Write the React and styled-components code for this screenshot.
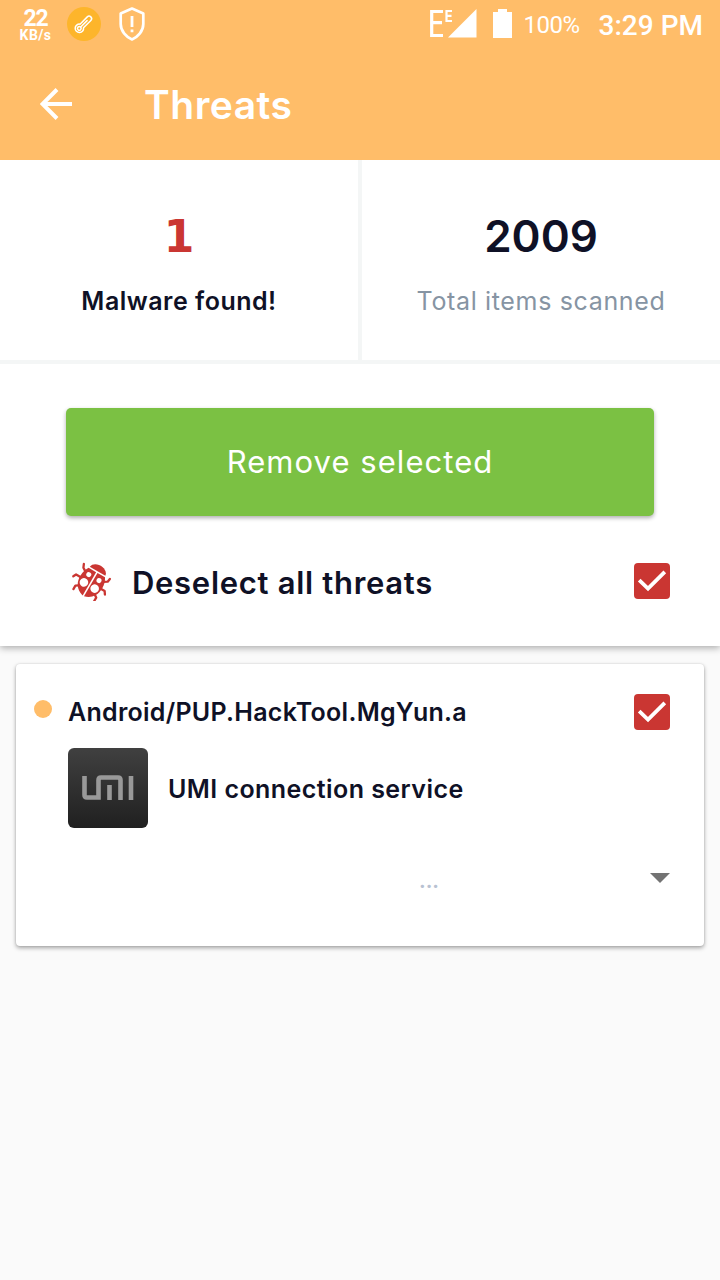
import React from "react";
import styled, { createGlobalStyle } from "styled-components";

const GlobalStyle = createGlobalStyle`
  * { box-sizing: border-box; }
  body { margin: 0; background: #fafafa; font-family: Inter, sans-serif; color: #0f1126; }
`;

const Screen = styled.div`
  width: 720px;
  height: 1280px;
  overflow: hidden;
  background: #fafafa;
`;

const Text = styled.span`
  display: block;
  white-space: nowrap;
  font-size: ${(p) => p.$size}px;
  line-height: ${(p) => p.$line || p.$size}px;
  font-weight: ${(p) => p.$weight || 400};
  letter-spacing: ${(p) => p.$track || 0}px;
  color: ${(p) => p.$color || "#0f1126"};
  font-family: ${(p) => p.$font || "Inter"}, sans-serif;
`;

const Header = styled.header`
  height: 160px;
  background: #ffbd69;
`;

const StatusBar = styled.div`
  height: 50px;
  padding: 0 17px 0 19px;
  display: flex;
  justify-content: space-between;
`;

const StatusGroup = styled.div`
  display: flex;
  align-items: flex-start;
`;

const Speed = styled.div`
  width: 33px;
  margin-right: 15px;
  padding-top: 7px;
  display: flex;
  flex-direction: column;
  align-items: center;
`;

const StatusIcon = styled.svg`
  display: block;
  flex: none;
  margin-top: ${(p) => p.$top}px;
  margin-right: ${(p) => p.$gap || 0}px;
`;

const StatusText = styled(Text)`
  margin-top: ${(p) => p.$top}px;
  margin-right: ${(p) => p.$gap || 0}px;
`;

const AppBar = styled.div`
  height: 110px;
  padding: 0 40px 2px;
  display: flex;
  align-items: center;
  gap: 72px;
`;

const Title = styled(Text)`
  padding-top: 2px;
`;

const Stats = styled.section`
  position: relative;
  height: 204px;
  display: flex;
  background: #fff;
  border-bottom: 4px solid #f4f6f6;
`;

const Stat = styled.div`
  flex: 1;
  padding-top: 46px;
  display: flex;
  flex-direction: column;
  align-items: center;
  gap: 19px;
`;

const Divider = styled.div`
  width: 4px;
  background: #f4f6f6;
`;

const Actions = styled.section`
  height: 282px;
  padding: 44px 50px 0 66px;
  background: #fff;
  box-shadow: 0 2px 7px rgba(0, 0, 0, 0.32);
`;

const RemoveButton = styled.button`
  display: flex;
  align-items: center;
  justify-content: center;
  width: 588px;
  height: 108px;
  padding: 0;
  border: 0;
  border-radius: 5px;
  background: #7bc143;
  box-shadow: 0 2px 4px rgba(0, 0, 0, 0.32);
`;

const SelectRow = styled.div`
  display: flex;
  align-items: center;
  height: 40px;
  margin-top: 45px;
  padding-left: 5px;
`;

const SelectLabel = styled(Text)`
  flex: 1;
  margin-left: 20px;
  padding-top: 3px;
`;

const Check = styled.svg`
  display: block;
  flex: none;
  border-radius: 4px;
  background: #ca3632;
`;

const Card = styled.article`
  height: 282px;
  margin: 18px 16px 0;
  padding: 30px 34px 0 18px;
  background: #fff;
  border-radius: 4px;
  box-shadow: 0 2px 4px rgba(0, 0, 0, 0.34), 0 0 2px rgba(0, 0, 0, 0.12);
`;

const CardHeader = styled.div`
  display: flex;
  align-items: center;
  height: 36px;
`;

const Dot = styled.i`
  width: 18px;
  height: 18px;
  margin: 0 16px 6px 0;
  border-radius: 50%;
  background: #ffbd69;
`;

const ThreatName = styled(Text)`
  flex: 1;
  padding-bottom: 1px;
`;

const AppRow = styled.div`
  display: flex;
  align-items: center;
  gap: 20px;
  margin: 18px 0 0 34px;
`;

const AppName = styled(Text)`
  padding-top: 2px;
`;

const AppIcon = styled.div`
  display: flex;
  align-items: center;
  justify-content: center;
  width: 80px;
  height: 80px;
  border-radius: 6px;
  background: linear-gradient(#404040, #202020);
`;

const CardFooter = styled.div`
  display: flex;
  justify-content: space-between;
  align-items: flex-start;
  margin-top: 45px;
  padding-left: 385px;
`;

const Ellipsis = styled(Text)`
  margin-top: -5px;
`;

function CheckBox() {
  return (
    <Check width="36" height="36" viewBox="0 0 36 36">
      <path d="M5.2 17.2L14 25.6L30.8 8.8" fill="none" stroke="#fff" strokeWidth="3.8" />
    </Check>
  );
}

function LadybugIcon() {
  return (
    <svg width="41" height="40" viewBox="0 0 41 40">
      <g transform="translate(20.8 20.2) rotate(30)">
        <g fill="none" stroke="#ca3632" strokeWidth="2.3" strokeLinecap="round" strokeLinejoin="round">
          <path d="M-10-5L-14-7.5L-15.5-11" />
          <path d="M-12 2H-17L-18.5 5" />
          <path d="M-9 10L-12 12L-12 16" />
          <path d="M10-5L14-7.5L14.5-11" />
          <path d="M12 2H16L18 5" />
          <path d="M9 10L12 12L12 16" />
        </g>
        <path d="M-9-11.5C-8-20 8-20 9-11.5Z" fill="#ca3632" />
        <path d="M-0.8-10H-9.5C-13.5-4-13.5 5-10.5 10C-8 14-5 16-0.8 17Z" fill="#ca3632" />
        <path d="M0.8-10H9.5C13.5-4 13.5 5 10.5 10C8 14 5 16 0.8 17Z" fill="#ca3632" />
        <g fill="#fff">
          <circle cx="-5.9" cy="-4.2" r="2.5" />
          <circle cx="5.9" cy="-4.2" r="2.5" />
          <circle cx="-6.2" cy="5" r="4.3" />
          <circle cx="6.2" cy="5" r="4.3" />
        </g>
      </g>
    </svg>
  );
}

export default function App() {
  return (
    <Screen>
      <GlobalStyle />
      <Header>
        <StatusBar>
          <StatusGroup>
            <Speed>
              <Text $font="Roboto" $size={23} $line={23} $weight={700} $track={-1.3} $color="#fff">22</Text>
              <Text $font="Roboto" $size={14} $line={11} $weight={700} $track={0.4} $color="#fff">KB/s</Text>
            </Speed>
            <StatusIcon $top={7} $gap={17} width="34" height="34" viewBox="0 0 34 34">
              <circle cx="17" cy="17" r="17" fill="#fdb52b" />
              <g transform="translate(12.3 21.4) rotate(45)" fill="none" stroke="#fff" strokeWidth="1.5" strokeLinecap="round">
                <path d="M-2.5-3.5V-13.8A2.5 2.5 0 0 1 2.5-13.8V-3.5A4.2 4.2 0 1 1-2.5-3.5Z" />
                <path d="M0-11V-2" />
                <circle r="1.8" />
              </g>
            </StatusIcon>
            <StatusIcon $top={6} width="28" height="36" viewBox="0 0 28 36">
              <path d="M14 2.5L25.3 7.5V18C25.3 25 20 31 14 33.5C8 31 2.7 25 2.7 18V7.5Z" fill="none" stroke="#fff" strokeWidth="2.7" strokeLinejoin="round" />
              <path d="M12.6 10H15.4V21H12.6ZM12.6 23.5H15.4V26.3H12.6Z" fill="#fff" />
            </StatusIcon>
          </StatusGroup>
          <StatusGroup>
            <StatusIcon $top={9} $gap={16} width="48" height="29" viewBox="0 0 48 29">
              <path d="M14 2.5H2.7V26.5H14M2.7 13.7H13" fill="none" stroke="#fff" strokeWidth="3.2" />
              <path d="M23 2H17.5V12H23M17.5 6.8H22.5" fill="none" stroke="#fff" strokeWidth="2.2" />
              <path d="M47.5 0V28.5H19Z" fill="#fff" />
            </StatusIcon>
            <StatusIcon $top={9} $gap={12} width="19" height="29" viewBox="0 0 19 29">
              <path d="M5 0H14V3H19V29H0V3H5Z" fill="#fff" />
            </StatusIcon>
            <StatusText $top={12} $gap={19} $font="Roboto" $size={24} $line={26} $track={-0.5} $color="#fff">100%</StatusText>
            <StatusText $top={11} $font="Roboto" $size={28} $line={30} $weight={500} $color="#fff">3:29 PM</StatusText>
          </StatusGroup>
        </StatusBar>
        <AppBar>
          <svg width="32" height="32" viewBox="0 0 32 32">
            <path d="M32 16H3M17 1.5L2.5 16L17 30.5" fill="none" stroke="#fff" strokeWidth="4" />
          </svg>
          <Title $size={39} $line={44} $weight={600} $track={0.5} $color="#fff">Threats</Title>
        </AppBar>
      </Header>
      <Stats>
        <Stat>
          <Text $font='"DejaVu Sans"' $size={44} $line={61} $weight={700} $color="#ca3632">1</Text>
          <Text $size={25} $line={30} $weight={600} $track={0.5}>Malware found!</Text>
        </Stat>
        <Divider />
        <Stat>
          <Text $size={44} $line={61} $weight={600}>2009</Text>
          <Text $size={25} $line={30} $track={0.65} $color="#8694a3">Total items scanned</Text>
        </Stat>
      </Stats>
      <Actions>
        <RemoveButton>
          <Text $size={31} $line={36} $track={1.05} $color="#fff">Remove selected</Text>
        </RemoveButton>
        <SelectRow>
          <LadybugIcon />
          <SelectLabel $size={31} $line={36} $weight={600} $track={0.7}>Deselect all threats</SelectLabel>
          <CheckBox />
        </SelectRow>
      </Actions>
      <Card>
        <CardHeader>
          <Dot />
          <ThreatName $size={25} $line={30} $weight={600} $track={0.27}>Android/PUP.HackTool.MgYun.a</ThreatName>
          <CheckBox />
        </CardHeader>
        <AppRow>
          <AppIcon>
            <svg width="52" height="26" viewBox="0 0 52 26">
              <path d="M2.5 1V20Q2.5 22.5 5 22.5H16.5V5Q16.5 2.5 19 2.5H36Q38.5 2.5 38.5 5V25M27.5 10V25M49 1V25" fill="none" stroke="#999" strokeWidth="4.6" />
            </svg>
          </AppIcon>
          <AppName $size={25} $line={30} $weight={600} $track={0.44}>UMI connection service</AppName>
        </AppRow>
        <CardFooter>
          <Ellipsis $size={20} $line={26} $weight={700} $color="#b8c2d2">...</Ellipsis>
          <svg width="20" height="10" viewBox="0 0 20 10">
            <path d="M0 0H20L10 10Z" fill="#737373" />
          </svg>
        </CardFooter>
      </Card>
    </Screen>
  );
}
